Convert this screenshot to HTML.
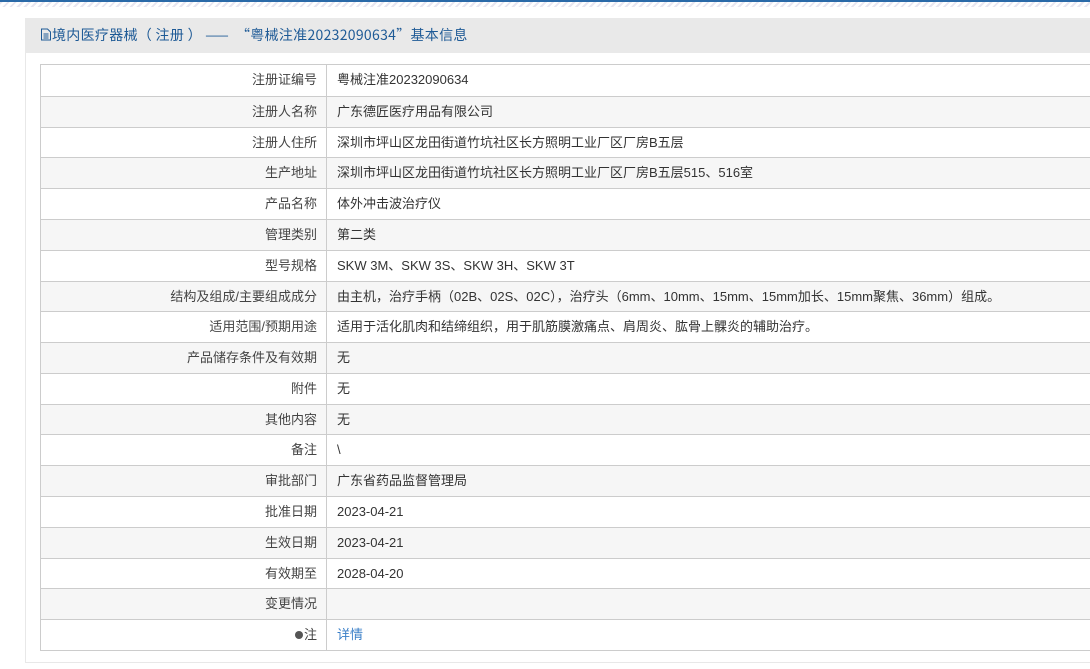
<!DOCTYPE html>
<html><head><meta charset="utf-8"><style>
*{margin:0;padding:0;box-sizing:border-box}
body{width:1090px;height:669px;background:#fff;font-family:"Liberation Sans","Noto Sans CJK SC",sans-serif;font-size:13px;color:#333;position:relative;overflow:hidden}
.topline{position:absolute;left:0;top:0;width:1090px;height:2px;background:#2a6aa8}
.hatch{position:absolute;left:0;top:2px;width:1090px;height:5px;background:repeating-linear-gradient(135deg,#e8e6f0 0 2px,#fff 2px 5px)}
.box{position:absolute;left:25px;top:18px;width:1070px;height:645px;border-left:1px solid #e8e8e8;border-bottom:1px solid #e8e8e8}
.head{position:absolute;left:25px;top:18px;width:1065px;height:35px;background:#e9e9e9;color:#1e5a96;font-family:"Noto Sans CJK SC",sans-serif;font-size:14px;letter-spacing:0.3px;line-height:35px;padding-left:15px;white-space:pre}
.tbl{position:absolute;left:40px;top:64px;width:1050px;height:587px;border:1px solid #ccc;border-right:none;display:grid;grid-template-rows:repeat(19,1fr)}
.r{display:flex;border-top:1px solid #ccc;line-height:29px}
.r:first-child{border-top:none}
.r:nth-child(even){background:#f6f6f6}
.l{width:286px;text-align:right;padding-right:9px;border-right:1px solid #ccc;color:#444}
.v{padding-left:10px;color:#333}
a{color:#3a7fc8;text-decoration:none}
.dot{display:inline-block;width:8px;height:8px;border-radius:50%;background:#555;margin-right:1px;vertical-align:-0px}
</style></head><body>
<div class="topline"></div><div class="hatch"></div>
<div class="box"></div>
<div class="head"><svg width="12" height="13" viewBox="0 0 12 13" style="vertical-align:-1px"><path d="M1.5 1h6l3 3v8h-9z" fill="none" stroke="#1e5a96"/><path d="M3.5 6h5M3.5 8h5M3.5 10h5" stroke="#1e5a96"/></svg>境内医疗器械（ 注册 ） ——  “粤械注准20232090634”基本信息</div>
<div class="tbl">
<div class="r"><div class="l">注册证编号</div><div class="v">粤械注准20232090634</div></div>
<div class="r"><div class="l">注册人名称</div><div class="v">广东德匠医疗用品有限公司</div></div>
<div class="r"><div class="l">注册人住所</div><div class="v">深圳市坪山区龙田街道竹坑社区长方照明工业厂区厂房B五层</div></div>
<div class="r"><div class="l">生产地址</div><div class="v">深圳市坪山区龙田街道竹坑社区长方照明工业厂区厂房B五层515、516室</div></div>
<div class="r"><div class="l">产品名称</div><div class="v">体外冲击波治疗仪</div></div>
<div class="r"><div class="l">管理类别</div><div class="v">第二类</div></div>
<div class="r"><div class="l">型号规格</div><div class="v">SKW 3M、SKW 3S、SKW 3H、SKW 3T</div></div>
<div class="r"><div class="l">结构及组成/主要组成成分</div><div class="v">由主机，治疗手柄（02B、02S、02C），治疗头（6mm、10mm、15mm、15mm加长、15mm聚焦、36mm）组成。</div></div>
<div class="r"><div class="l">适用范围/预期用途</div><div class="v">适用于活化肌肉和结缔组织，用于肌筋膜激痛点、肩周炎、肱骨上髁炎的辅助治疗。</div></div>
<div class="r"><div class="l">产品储存条件及有效期</div><div class="v">无</div></div>
<div class="r"><div class="l">附件</div><div class="v">无</div></div>
<div class="r"><div class="l">其他内容</div><div class="v">无</div></div>
<div class="r"><div class="l">备注</div><div class="v">\</div></div>
<div class="r"><div class="l">审批部门</div><div class="v">广东省药品监督管理局</div></div>
<div class="r"><div class="l">批准日期</div><div class="v">2023-04-21</div></div>
<div class="r"><div class="l">生效日期</div><div class="v">2023-04-21</div></div>
<div class="r"><div class="l">有效期至</div><div class="v">2028-04-20</div></div>
<div class="r"><div class="l">变更情况</div><div class="v"></div></div>
<div class="r"><div class="l"><span class="dot"></span>注</div><div class="v"><a>详情</a></div></div>
</div>
</body></html>
